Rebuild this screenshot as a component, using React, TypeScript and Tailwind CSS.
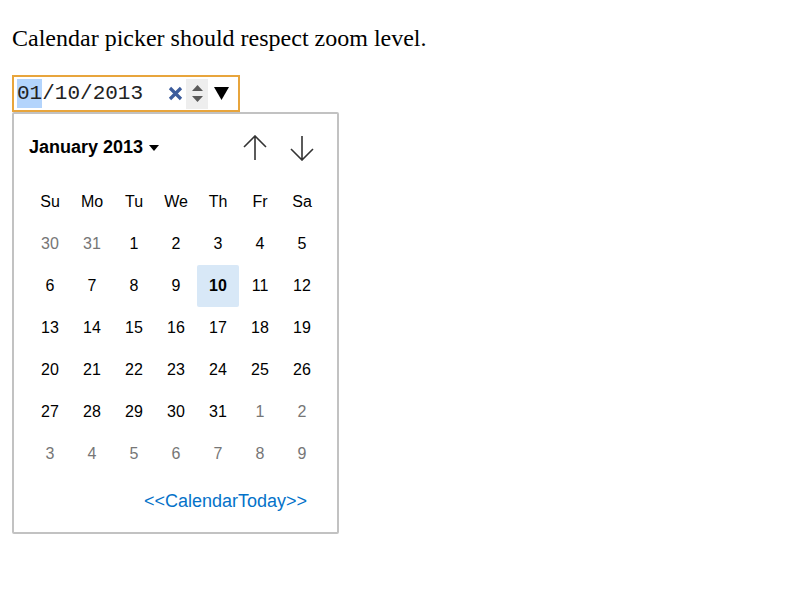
const weeks = [
  [30, 31, 1, 2, 3, 4, 5],
  [6, 7, 8, 9, 10, 11, 12],
  [13, 14, 15, 16, 17, 18, 19],
  [20, 21, 22, 23, 24, 25, 26],
  [27, 28, 29, 30, 31, 1, 2],
  [3, 4, 5, 6, 7, 8, 9],
]

const dayNames = ["Su", "Mo", "Tu", "We", "Th", "Fr", "Sa"]

export default function App() {
  return (
    <div className="min-h-[600px] w-[800px] bg-white px-3 pt-[24px] text-black">
      <p className="font-['Liberation_Serif',serif] text-[24px] leading-[28px]">
        Calendar picker should respect zoom level.
      </p>

      {/* date input */}
      <div className="mt-[23px] flex h-[37px] w-[228px] items-center border-2 border-[#e8a53c] pl-[3px] pr-2">
        <span className="font-['Liberation_Mono',monospace] text-[21px] leading-none text-[#222]">
          <span className="bg-[#b3d4fc] py-[3px]">01</span>/10/2013
        </span>
        <svg className="ml-[25px] h-[15px] w-[15px]" viewBox="0 0 15 15">
          <path d="M2 2 L13 13 M13 2 L2 13" stroke="#3c5c9c" strokeWidth="3.2" strokeLinecap="butt" />
        </svg>
        <div className="ml-[3px] flex h-[30px] w-[22px] flex-col items-center justify-center gap-[5px] bg-[#eeeeee]">
          <svg width="11" height="6" viewBox="0 0 11 6">
            <path d="M5.5 0 L11 6 L0 6 Z" fill="#5a5a5a" />
          </svg>
          <svg width="11" height="6" viewBox="0 0 11 6">
            <path d="M0 0 L11 0 L5.5 6 Z" fill="#5a5a5a" />
          </svg>
        </div>
        <svg className="ml-[6px]" width="15" height="13" viewBox="0 0 15 13">
          <path d="M0 0 L15 0 L7.5 13 Z" fill="#000" />
        </svg>
      </div>

      {/* popup */}
      <div className="w-[327px] rounded-[2px] border-2 border-[#c2c2c2] bg-white pb-[17px] pl-[15px] font-['Liberation_Sans',Arial,sans-serif]">
        <div className="flex h-[67px] items-center pr-[23px]">
          <span className="text-[18px] font-bold">January 2013</span>
          <svg className="ml-[6px] mt-[1px]" width="10" height="6" viewBox="0 0 10 6">
            <path d="M0 0 L10 0 L5 6 Z" fill="#000" />
          </svg>
          <div className="ml-auto flex items-center gap-[23px]">
            <svg width="24" height="26" viewBox="0 0 24 26" fill="none" stroke="#333" strokeWidth="1.6">
              <path d="M12 1 V25 M1 12 L12 1 L23 12" />
            </svg>
            <svg width="24" height="26" viewBox="0 0 24 26" fill="none" stroke="#333" strokeWidth="1.6">
              <path d="M12 1 V25 M1 14 L12 25 L23 14" />
            </svg>
          </div>
        </div>

        <div className="grid w-[294px] grid-cols-7 text-[16px]">
          {dayNames.map((d) => (
            <div key={d} className="flex h-[42px] items-center justify-center">
              {d}
            </div>
          ))}
          {weeks.map((week, wi) =>
            week.map((n, di) => {
              const outside = (wi === 0 && n > 20) || (wi >= 4 && n < 15)
              const selected = wi === 1 && n === 10
              return (
                <div
                  key={`${wi}-${di}`}
                  className={
                    selected
                      ? "flex h-[42px] items-center justify-center rounded-[2px] bg-[#d8e8f7] font-bold"
                      : outside
                        ? "flex h-[42px] items-center justify-center text-[#767676]"
                        : "flex h-[42px] items-center justify-center"
                  }
                >
                  {n}
                </div>
              )
            })
          )}
        </div>

        <div className="mt-[13px] flex justify-end pr-[30px]">
          <span className="text-[18px] text-[#0472c9]">&lt;&lt;CalendarToday&gt;&gt;</span>
        </div>
      </div>
    </div>
  )
}
